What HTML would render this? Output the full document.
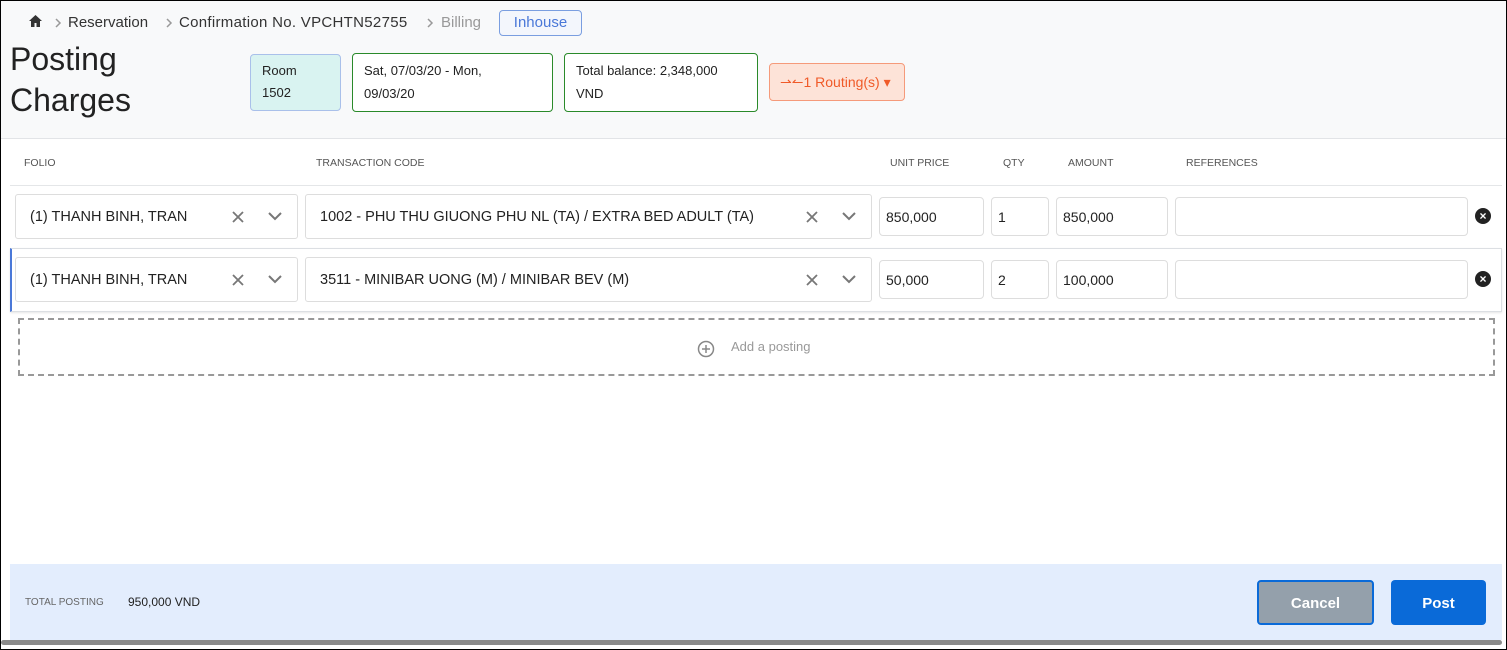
<!DOCTYPE html><html><head><style>
*{box-sizing:border-box;margin:0;padding:0}
body{width:1507px;height:650px;overflow:hidden;font-family:"Liberation Sans",sans-serif;background:#fff;position:relative;color:#222}
.frame{position:absolute;left:0;top:0;width:1507px;height:650px;border:1px solid #000;}
.abs{position:absolute}
.hdr{left:1px;top:1px;width:1505px;height:138px;background:#f8f9fa;border-bottom:1px solid #e2e4e7}
.crumb{font-size:15px;color:#333;top:14px}
.card{border-radius:4px;font-size:13px;line-height:23px;padding:7px 11px;color:#222}
.inp{border:1px solid #ddd;border-radius:4px;background:#fff;font-size:14px;padding-left:6px;display:flex;align-items:center;color:#222}
.sel{border:1px solid #ddd;border-radius:3px;background:#fff;font-size:14.5px;display:flex;align-items:center;padding-left:14px;color:#222}
.th{font-size:10.5px;color:#555;top:157px}
.del{width:16px;height:16px;border-radius:50%;background:#222;color:#fff;font-size:12px;font-weight:bold;line-height:16px;text-align:center}
</style></head><body>
<div class="abs hdr"></div>
<svg class="abs" style="left:28px;top:14px" width="15" height="14" viewBox="0 0 15 14"><path d="M7.5 1L1 7h2v6h3.5V9h2v4H12V7h2z" fill="#333"/></svg>
<svg class="abs" style="left:54px;top:18px" width="8" height="10"><path d="M2 1l4 4-4 4" stroke="#999" stroke-width="1.5" fill="none"/></svg>
<div class="abs crumb" style="left:68px">Reservation</div>
<svg class="abs" style="left:165px;top:18px" width="8" height="10"><path d="M2 1l4 4-4 4" stroke="#999" stroke-width="1.5" fill="none"/></svg>
<div class="abs crumb" style="left:179px;letter-spacing:0.3px">Confirmation No. VPCHTN52755</div>
<svg class="abs" style="left:426px;top:18px" width="8" height="10"><path d="M2 1l4 4-4 4" stroke="#999" stroke-width="1.5" fill="none"/></svg>
<div class="abs crumb" style="left:441px;color:#999">Billing</div>
<div class="abs" style="left:499px;top:10px;width:83px;height:26px;border:1px solid #7a9ee0;border-radius:4px;color:#4a78d8;font-size:15px;text-align:center;line-height:24px;background:#f3f6fc">Inhouse</div>
<div class="abs" style="left:10px;top:39px;font-size:32px;line-height:41px;color:#222">Posting<br>Charges</div>
<div class="abs card" style="left:250px;top:54px;width:91px;height:57px;background:#d9f3f1;border:1px solid #a9c0ea;line-height:22px;padding-top:5px">Room<br>1502</div>
<div class="abs card" style="left:352px;top:53px;width:201px;height:59px;background:#fff;border:1px solid #2a8a2a;padding-top:5px">Sat, 07/03/20 - Mon,<br>09/03/20</div>
<div class="abs card" style="left:564px;top:53px;width:194px;height:59px;background:#fff;border:1px solid #2a8a2a;padding-top:5px">Total balance: 2,348,000<br>VND</div>
<div class="abs" style="left:769px;top:63px;width:136px;height:38px;background:#fde3d8;border:1px solid #f59a7a;border-radius:4px;color:#f05a28;font-size:14px;line-height:36px;padding-left:10px">⇀↼1 Routing(s) ▾</div>
<div class="abs th" style="left:24px">FOLIO</div>
<div class="abs th" style="left:316px">TRANSACTION CODE</div>
<div class="abs th" style="left:890px">UNIT PRICE</div>
<div class="abs th" style="left:1003px">QTY</div>
<div class="abs th" style="left:1068px">AMOUNT</div>
<div class="abs th" style="left:1186px">REFERENCES</div>
<div class="abs" style="left:10px;top:185px;width:1492px;height:1px;background:#e4e6e8"></div>
<div class="abs" style="left:10px;top:248px;width:1492px;height:64px;border:1px solid #dcdfe3;border-left:2px solid #4a78d8;box-shadow:0 1px 2px rgba(0,0,0,.1)"></div>
<!-- row1 -->
<div class="abs sel" style="left:15px;top:194px;width:283px;height:45px">(1) THANH BINH, TRAN</div>
<svg class="abs" style="left:231px;top:210px" width="14" height="14"><path d="M2 2l10 10M12 2L2 12" stroke="#777" stroke-width="1.8"/></svg>
<svg class="abs" style="left:267px;top:211px" width="16" height="10"><path d="M2 2l6 6 6-6" stroke="#777" stroke-width="2" fill="none"/></svg>
<div class="abs sel" style="left:305px;top:194px;width:567px;height:45px">1002 - PHU THU GIUONG PHU NL (TA) / EXTRA BED ADULT (TA)</div>
<svg class="abs" style="left:805px;top:210px" width="14" height="14"><path d="M2 2l10 10M12 2L2 12" stroke="#777" stroke-width="1.8"/></svg>
<svg class="abs" style="left:841px;top:211px" width="16" height="10"><path d="M2 2l6 6 6-6" stroke="#777" stroke-width="2" fill="none"/></svg>
<div class="abs inp" style="left:879px;top:197px;width:105px;height:39px">850,000</div>
<div class="abs inp" style="left:991px;top:197px;width:58px;height:39px">1</div>
<div class="abs inp" style="left:1056px;top:197px;width:112px;height:39px">850,000</div>
<div class="abs inp" style="left:1175px;top:197px;width:293px;height:39px"></div>
<div class="abs del" style="left:1475px;top:208px">×</div>
<!-- row2 -->
<div class="abs sel" style="left:15px;top:257px;width:283px;height:45px">(1) THANH BINH, TRAN</div>
<svg class="abs" style="left:231px;top:273px" width="14" height="14"><path d="M2 2l10 10M12 2L2 12" stroke="#777" stroke-width="1.8"/></svg>
<svg class="abs" style="left:267px;top:274px" width="16" height="10"><path d="M2 2l6 6 6-6" stroke="#777" stroke-width="2" fill="none"/></svg>
<div class="abs sel" style="left:305px;top:257px;width:567px;height:45px">3511 - MINIBAR UONG (M) / MINIBAR BEV (M)</div>
<svg class="abs" style="left:805px;top:273px" width="14" height="14"><path d="M2 2l10 10M12 2L2 12" stroke="#777" stroke-width="1.8"/></svg>
<svg class="abs" style="left:841px;top:274px" width="16" height="10"><path d="M2 2l6 6 6-6" stroke="#777" stroke-width="2" fill="none"/></svg>
<div class="abs inp" style="left:879px;top:260px;width:105px;height:39px">50,000</div>
<div class="abs inp" style="left:991px;top:260px;width:58px;height:39px">2</div>
<div class="abs inp" style="left:1056px;top:260px;width:112px;height:39px">100,000</div>
<div class="abs inp" style="left:1175px;top:260px;width:293px;height:39px"></div>
<div class="abs del" style="left:1475px;top:271px">×</div>
<div class="abs" style="left:18px;top:318px;width:1477px;height:58px;border:2px dashed #999"></div>
<svg class="abs" style="left:697px;top:340px" width="18" height="18"><circle cx="9" cy="9" r="7.5" stroke="#888" stroke-width="1.5" fill="none"/><path d="M9 5v8M5 9h8" stroke="#888" stroke-width="1.5"/></svg>
<div class="abs" style="left:731px;top:339px;font-size:13px;color:#999">Add a posting</div>
<div class="abs" style="left:10px;top:564px;width:1492px;height:76px;background:#e3edfd"></div>
<div class="abs" style="left:25px;top:597px;font-size:10px;color:#666">TOTAL POSTING</div>
<div class="abs" style="left:128px;top:595px;font-size:12px;color:#222">950,000 VND</div>
<div class="abs" style="left:1257px;top:580px;width:117px;height:45px;background:#94a0ab;border:2px solid #0a6ad8;border-radius:4px;color:#fff;font-size:15px;font-weight:bold;text-align:center;line-height:43px">Cancel</div>
<div class="abs" style="left:1391px;top:580px;width:95px;height:45px;background:#0a6ad8;border-radius:4px;color:#fff;font-size:15px;font-weight:bold;text-align:center;line-height:47px">Post</div>
<div class="abs" style="left:1px;top:640px;width:1501px;height:5px;background:#8a8a8a;border-radius:3px"></div>
<div class="frame"></div>
</body></html>
